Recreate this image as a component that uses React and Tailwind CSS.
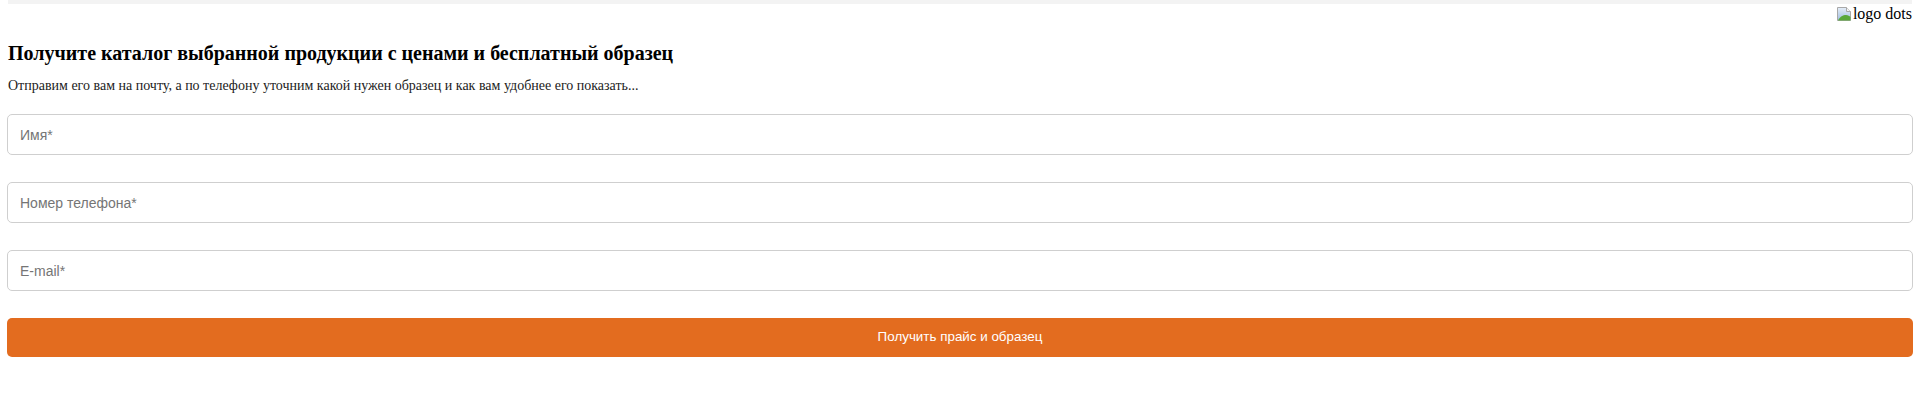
import React from 'react';

const BrokenImageIcon = () => (
  <svg width="16" height="16" viewBox="0 0 16 16" className="mr-[1px] shrink-0">
    <defs>
      <linearGradient id="sky" x1="0" y1="0" x2="0" y2="1">
        <stop offset="0" stopColor="#e6eef8" />
        <stop offset="1" stopColor="#9fbde0" />
      </linearGradient>
    </defs>
    <path d="M1.5 1.5h9l4 4v9h-13z" fill="url(#sky)" stroke="#a8a8a8" />
    <path d="M10.5 1.5v4h4" fill="#f4f4f4" stroke="#a8a8a8" />
    <path d="M2 14.5c2-4 5-5.5 8-5.5 2 0 3.5 1 4.5 2v3.5z" fill="#5aa83a" />
  </svg>
);

const Field = ({ placeholder, type = 'text' }) => (
  <input
    type={type}
    placeholder={placeholder}
    className="h-[41px] w-full rounded-[5px] border border-[#cfcfcf] bg-white px-[12px] font-['Liberation_Sans',Arial,sans-serif] text-[14px] text-[#333] placeholder:text-[#757575] outline-none"
  />
);

export default function App() {
  return (
    <div className="min-h-[406px] bg-white px-[7px] pr-[6px] font-['Liberation_Serif','Times_New_Roman',serif] text-black">
      {/* остаток верхнего блока */}
      <div className="mx-[1px] h-[4px] bg-[#f3f3f3]" />

      {/* логотип (картинка не загрузилась) */}
      <div className="flex h-[20px] items-center justify-end pr-[1px]">
        <div className="flex items-center text-[16px] leading-[18px]">
          <BrokenImageIcon />
          <span>logo dots</span>
        </div>
      </div>

      <h3 className="mt-[18px] pl-[1px] text-[20px] font-bold leading-[23px]">
        Получите каталог выбранной продукции с ценами и бесплатный образец
      </h3>
      <p className="mt-[13px] pl-[1px] text-[14px] leading-[16px] text-[#222]">
        Отправим его вам на почту, а по телефону уточним какой нужен образец и как вам удобнее его показать...
      </p>

      <form className="mt-[20px] flex flex-col gap-[27px]" onSubmit={(e) => e.preventDefault()}>
        <Field placeholder="Имя*" />
        <Field placeholder="Номер телефона*" type="tel" />
        <Field placeholder="E-mail*" type="email" />
        <button
          type="submit"
          className="h-[39px] w-full rounded-[5px] bg-[#e36c1f] font-['Liberation_Sans',Arial,sans-serif] text-[13.4px] text-white"
        >
          Получить прайс и образец
        </button>
      </form>
    </div>
  );
}
